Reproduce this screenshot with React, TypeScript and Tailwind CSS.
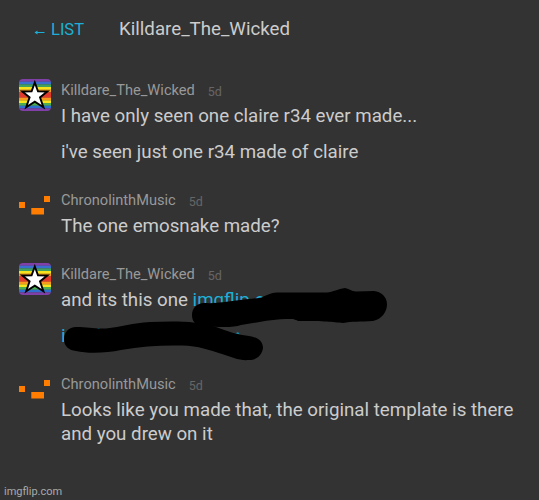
import type { ReactNode } from 'react';

const STRIPES = ['#8140a8', '#3a6fd0', '#3fa060', '#f6e51d', '#f79b1e', '#e23b2e', '#e23b2e', '#f79b1e', '#f6e51d', '#4cae50', '#2f6fd0', '#8140a8'];

function StarAvatar() {
  return (
    <svg viewBox="0 0 32 32" className="block h-8 w-8 rounded-[4px]">
      {STRIPES.map((color, i) => (
        <rect key={i} x="0" y={i * 2.67} width="32" height="2.8" fill={color} />
      ))}
      <path
        d="M15.8 3.5 L19 12.3 L28.4 12.5 L21 18.4 L24.4 28.2 L15.8 22.6 L7.2 28.2 L10.6 18.4 L3.2 12.5 L12.6 12.3 Z"
        fill="#fff"
        stroke="#000"
        strokeWidth="1.9"
      />
    </svg>
  );
}

function PixelAvatar() {
  return (
    <svg viewBox="0 0 32 32" className="block h-8 w-8" fill="#ff7d00">
      <rect x="0" y="13" width="6" height="6" />
      <rect x="12.3" y="19" width="12.7" height="6.5" />
      <rect x="25" y="7" width="6" height="6" />
    </svg>
  );
}

type MessageProps = {
  avatar: ReactNode;
  name: string;
  children: ReactNode;
};

function Message({ avatar, name, children }: MessageProps) {
  return (
    <div className="flex gap-[10px]">
      <div className="w-8 shrink-0">{avatar}</div>
      <div className="min-w-0">
        <div className="flex h-[25px] items-baseline gap-[13px] whitespace-nowrap leading-[23px]">
          <span className="text-[14.63px] text-[#999]">{name}</span>
          <span className="relative top-px text-[12.5px] text-[#666]">5d</span>
        </div>
        <div className="flex flex-col gap-3 whitespace-nowrap text-[18.73px] leading-6 text-[#ccc]">{children}</div>
      </div>
    </div>
  );
}

export default function App() {
  return (
    <div className="relative flex h-[500px] w-[539px] flex-col overflow-hidden bg-[#333] font-[Roboto,sans-serif]">
      <div className="flex h-[79px] items-start pl-[33px] pt-[17px] leading-6">
        <a className="flex w-[86px] gap-[6px] pt-px text-[16.5px] text-[#1cb0d8]">
          <svg viewBox="0 0 12 24" className="h-6 w-3" fill="none" stroke="currentColor">
            <path d="M2 14.5 H11.5" />
            <path d="M1.5 14.5 L4.5 12.5 V16.5 Z" fill="currentColor" stroke="none" />
          </svg>
          LIST
        </a>
        <h1 className="text-[18.7px] text-[#ccc]">Killdare_The_Wicked</h1>
      </div>

      <div className="flex flex-col gap-[25px] pl-[19px]">
        <Message avatar={<StarAvatar />} name="Killdare_The_Wicked">
          <p>I have only seen one claire r34 ever made...</p>
          <p>i've seen just one r34 made of claire</p>
        </Message>
        <Message avatar={<PixelAvatar />} name="ChronolinthMusic">
          <p>The one emosnake made?</p>
        </Message>
        <Message avatar={<StarAvatar />} name="Killdare_The_Wicked">
          <p>
            and its this one <a className="text-[#1cb0d8]">imgflip.c</a>
          </p>
          <p>
            <a className="text-[#1cb0d8]">i</a>
          </p>
        </Message>
        <Message avatar={<PixelAvatar />} name="ChronolinthMusic">
          <p>
            Looks like you made that, the original template is there
            <br />
            and you drew on it
          </p>
        </Message>
      </div>

      {/* marker scribbles over the links */}
      <svg viewBox="0 0 539 500" className="pointer-events-none absolute inset-0 h-full w-full">
        <path d="M235 333.5 L238 332 L240 334.5 Z M96 329.5 L98.5 328 L101 329.5 Z" fill="#1588a6" />
        <path d="M204 303 C220 304 236 300 260 298 C266 296 269 293 277 292.5 L327 292.5 C333 292 338 289 345 288 C350 289 351 291 356 291.5 L374 291 C381 291.5 387 297 387 304 C387 312 382 319 373 321 C360 322 352 321 343 323 C332 322 325 321 300 321 C296 321 296 319 291 319 C270 319 256 323 241 325 C233 328 217 327 204 326 C196 326 192 322 192 315 C192 308 197 303 204 303 Z" />
        <path d="M76 327 C88 327 94 329 106 328.5 C121 327 133 323 150 322 C175 321 198 321 216 327 C227 331 238 335 249 336 C257 337 263 341 263 348 C262 355 257 360 249 360 C240 361 231 357 222 354 C209 350 199 346 182 345.5 C163 345 142 346 121 350 C107 353 88 354 76 351 C68 350 64 346 64 339 C64 332 69 327 76 327 Z" />
      </svg>

      <span className="absolute bottom-[1px] left-[4px] text-[11px] leading-[14px] text-[#aaa]">imgflip.com</span>
    </div>
  );
}
